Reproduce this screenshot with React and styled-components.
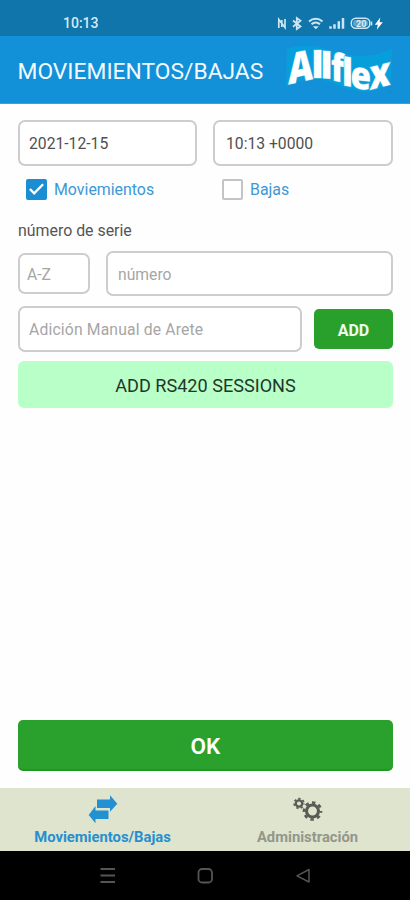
import { useState } from 'react';
import styled, { createGlobalStyle } from 'styled-components';

const GlobalStyle = createGlobalStyle`
  * {
    box-sizing: border-box;
  }

  body {
    margin: 0;
    background-color: #fefefe;
    font-family: Roboto, 'Noto Sans', sans-serif;
  }

  button,
  input {
    font-family: inherit;
  }
`;

const StyledScreen = styled.div`
  width: 410px;
  height: 900px;
  display: flex;
  flex-direction: column;
  overflow: hidden;
`;

// phone status bar
const StyledStatusBar = styled.div`
  height: 36px;
  padding: 14px 26px 0 63px;
  display: flex;
  justify-content: space-between;
  align-items: flex-start;
  background-color: #0f75aa;
`;

const StyledClock = styled.span`
  font-size: 14px;
  font-weight: 500;
  line-height: 19px;
  color: #d6eaf5;
`;

const StyledHeader = styled.header`
  height: 68px;
  padding: 0 16px 0 17.5px;
  display: flex;
  justify-content: space-between;
  align-items: center;
  background-color: #1391d8;
  border-bottom: 1px solid #3f9fd6;
`;

const StyledTitle = styled.h1`
  margin: 3px 0 0 0;
  font-size: 22.8px;
  font-weight: 400;
  white-space: nowrap;
  color: #f2faff;
`;

const StyledMain = styled.main`
  flex: 1;
  padding: 16px 17px 17px 18px;
  display: flex;
  flex-direction: column;
`;

const StyledRow = styled.div`
  display: flex;
  align-items: center;
  gap: ${(props) => props.$gap}px;
  margin-bottom: ${(props) => props.$bottom}px;
`;

const StyledInput = styled.input`
  width: ${(props) => props.$width}px;
  height: ${(props) => props.$height || 46}px;
  padding: 1px 11px 0 ${(props) => props.$left || 9}px;
  border: 2px solid #cdcdcd;
  border-radius: 7px;
  outline: none;
  background-color: #ffffff;
  font-size: 15.7px;
  letter-spacing: ${(props) => props.$spacing || 0}px;
  color: #505050;

  &::placeholder {
    color: #a6a6a6;
    opacity: 1;
  }
`;

const StyledCheckRow = styled.div`
  display: grid;
  grid-template-columns: 196px 1fr;
  height: 22px;
  padding-left: 8px;
  margin-bottom: 19px;
`;

const StyledCheckLabel = styled.button`
  padding: 0;
  border: none;
  background: none;
  display: flex;
  align-items: center;
  gap: 7px;
  font-size: 15.9px;
  color: #3d98d6;
`;

const StyledBox = styled.span`
  width: 21px;
  height: 21px;
  display: flex;
  justify-content: center;
  align-items: center;
  border: 2px solid ${(props) => (props.$checked ? '#1b8dd3' : '#c4c4c4')};
  border-radius: 2px;
  background-color: ${(props) => (props.$checked ? '#1b8dd3' : '#ffffff')};
`;

const StyledFieldTitle = styled.p`
  margin: 0 0 8px 0;
  height: 24px;
  line-height: 24px;
  font-size: 15.9px;
  color: #555555;
`;

const StyledAddButton = styled.button`
  width: 79px;
  height: 40px;
  padding: 2px 0 0 0;
  border: none;
  border-radius: 5px;
  background-color: #2aa02c;
  font-size: 16px;
  font-weight: 700;
  color: #eefbee;
`;

const StyledSessionsButton = styled.button`
  height: 47px;
  padding: 1px 0 0 0;
  border: none;
  border-radius: 6px;
  background-color: #b8ffc8;
  font-size: 18.1px;
  color: #24362a;
`;

const StyledOkButton = styled.button`
  height: 51px;
  margin-top: auto;
  padding: 3px 0 0 0;
  border: none;
  border-bottom: 2px solid #1c981f;
  border-radius: 5px;
  background-color: #2ba12d;
  font-size: 22.5px;
  font-weight: 600;
  color: #ffffff;
`;

const StyledTabBar = styled.nav`
  height: 63px;
  display: grid;
  grid-template-columns: 1fr 1fr;
  background-color: #dee4cd;
`;

const StyledTab = styled.button`
  padding: 7px 0 0 0;
  border: none;
  background: none;
  display: flex;
  flex-direction: column;
  align-items: center;
  gap: 4px;
  font-size: 14.8px;
  font-weight: 700;
  line-height: 20px;
  color: ${(props) => (props.$active ? '#258fd0' : '#93978a')};
`;

const StyledAndroidBar = styled.div`
  height: 49px;
  display: flex;
  justify-content: center;
  align-items: center;
  background-color: #000000;
`;

// letters are placed by matrix, their boxes can run past the drawing
const StyledLogo = styled.svg`
  overflow: visible;
`;

function StatusIcons() {
  return (
    <svg width='108' height='18' viewBox='276 14 108 18' fill='none' stroke='#cde5f2' strokeWidth='1.5'>
      {/* nfc */}
      <path d='M278.800 28V19.500l6.200 8V19M281.800 20v7' strokeWidth='1.700' />
      {/* bluetooth */}
      <path d='M293 20.500l7.500 6-3.700 2.500v-11l3.700 2.700-7.500 6' strokeWidth='1.800' />
      {/* wifi */}
      <path d='M309 21.500c4-3.700 9.500-3.700 13.500 0M311.500 24.300c2.500-2.300 6-2.300 8.500 0' strokeWidth='2.100' />
      <path d='M312.800 26.300h6l-3 3z' fill='#cde5f2' stroke='none' />
      {/* signal */}
      <path d='M330.500 28.700v-2.500M334.500 28.700v-4.500M338.800 28.700v-7.500M343 28.700V18' strokeWidth='2.500' />
      {/* battery */}
      <rect x='351.300' y='18.300' width='18.500' height='10' rx='4.500' />
      <rect x='353' y='20' width='15' height='6.600' rx='3' fill='#5fa5c8' stroke='none' />
      <path d='M371.500 21.500v4' />
      <text x='356' y='26.500' fontSize='9' fontWeight='700' fontFamily='Roboto, sans-serif' fill='#d9edf7' stroke='none'>
        20
      </text>
      <path d='M380.300 17.500l-5.500 7.200h3l-1 5 6-7.500h-3.200z' fill='#ffffff' stroke='none' />
    </svg>
  );
}

// each letter gets its own matrix so that the word follows the wave
const logoLetters = [
  { char: 'A', matrix: '1 -0.22 0 1.25 288.300 84.5' },
  { char: 'l', matrix: '1.1 0 0 1.07 311.500 77.500' },
  { char: 'l', matrix: '1.1 0.08 0 1.06 320.500 78' },
  { char: 'f', matrix: '0.93 0.2 0 1.13 331 80' },
  { char: 'l', matrix: '1 0.2 0 1.13 342 85' },
  { char: 'e', matrix: '0.98 0.1 0 1.12 350.500 88' },
  { char: 'x', matrix: '0.98 -0.25 0 1.2 369.500 90' },
];

function AllflexLogo() {
  return (
    <StyledLogo width='110' height='52' viewBox='284 44 110 52'>
      <path
        d='M287 49C303 44 317 46 330 50C350 57 370 59 392 49L391 83C372 96 352 92 335 84C318 76 302 78 286 87z'
        fill='#079fdb'
      />
      <g fontFamily='"Open Sans", sans-serif' fontWeight='800' fontSize='34' fill='#ffffff'>
        {logoLetters.map((letter, index) => (
          <text key={index} transform={`matrix(${letter.matrix})`} stroke='#4fb8e4' strokeWidth='1' paintOrder='stroke'>
            {letter.char}
          </text>
        ))}
      </g>
      <circle cx='390' cy='91.500' r='1.200' fill='#2c80b2' />
    </StyledLogo>
  );
}

function ArrowsIcon() {
  return (
    <svg width='30' height='28' viewBox='88 795 30 28' fill='#2390d2'>
      <path d='M97 799.500h13v-4.200l7.300 8.400-7.300 8v-3.700H97z' />
      <path d='M108.500 819h-13v4.200L88.700 815l6.800-9v4.500h13z' />
    </svg>
  );
}

// toothed wheel : dashed ring around a hollow circle
function Gear({ cx, cy, radius, width, teeth }) {
  const ring = radius + width;
  const dash = (2 * Math.PI * ring) / (teeth * 2);
  return (
    <g fill='none' stroke='#595c56'>
      <circle cx={cx} cy={cy} r={radius} strokeWidth={width + 0.4} />
      <circle cx={cx} cy={cy} r={ring - 0.2} strokeWidth={width} strokeDasharray={dash} strokeDashoffset={dash / 2} />
    </g>
  );
}

function GearsIcon() {
  return (
    <svg width='32' height='28' viewBox='292 795 32 28'>
      <Gear cx={299} cy={803.5} radius={3.2} width={1.8} teeth={7} />
      <Gear cx={312.5} cy={811} radius={6} width={2.7} teeth={8} />
    </svg>
  );
}

function AndroidIcons() {
  return (
    <svg width='212' height='18' viewBox='99 867 212 18' fill='none' stroke='#555555' strokeWidth='1.800'>
      <path d='M100.500 869h14.500M100.500 875.500h14.500M100.500 882h14.500' />
      <rect x='198.500' y='869' width='13.500' height='13.500' rx='3.500' />
      <path d='M309 869.500v12.500l-12-6.200z' strokeWidth='1.500' strokeLinejoin='round' />
    </svg>
  );
}

export default function App() {
  const [type, setType] = useState('movimientos');

  return (
    <>
      <GlobalStyle />
      <StyledScreen>
        <StyledStatusBar>
          <StyledClock>10:13</StyledClock>
          <StatusIcons />
        </StyledStatusBar>
        <StyledHeader>
          <StyledTitle>MOVIEMIENTOS/BAJAS</StyledTitle>
          <AllflexLogo />
        </StyledHeader>

        <StyledMain>
          <StyledRow $gap={16} $bottom={12}>
            <StyledInput $width={179} defaultValue='2021-12-15' />
            <StyledInput $width={180} $left={11} defaultValue='10:13 +0000' />
          </StyledRow>

          <StyledCheckRow>
            <StyledCheckLabel onClick={() => setType('movimientos')}>
              <StyledBox $checked={type === 'movimientos'}>
                {type === 'movimientos' && (
                  <svg width='17' height='14' viewBox='0 0 18 14' fill='none' stroke='#ffffff' strokeWidth='2.500'>
                    <path d='M2 7l4.500 4.500L16 2' />
                  </svg>
                )}
              </StyledBox>
              Moviemientos
            </StyledCheckLabel>
            <StyledCheckLabel onClick={() => setType('bajas')}>
              <StyledBox $checked={type === 'bajas'} />
              Bajas
            </StyledCheckLabel>
          </StyledCheckRow>

          <StyledFieldTitle>número de serie</StyledFieldTitle>
          <StyledRow $gap={16} $bottom={10}>
            <StyledInput $width={72} $height={41} $left={7} placeholder='A-Z' />
            <StyledInput $width={287} $height={45} $left={10} placeholder='número' />
          </StyledRow>
          <StyledRow $gap={12} $bottom={9}>
            <StyledInput $width={284} $spacing={0.17} placeholder='Adición Manual de Arete' />
            <StyledAddButton>ADD</StyledAddButton>
          </StyledRow>
          <StyledSessionsButton>ADD RS420 SESSIONS</StyledSessionsButton>
          <StyledOkButton>OK</StyledOkButton>
        </StyledMain>

        <StyledTabBar>
          <StyledTab $active>
            <ArrowsIcon />
            Moviemientos/Bajas
          </StyledTab>
          <StyledTab>
            <GearsIcon />
            Administración
          </StyledTab>
        </StyledTabBar>
        <StyledAndroidBar>
          <AndroidIcons />
        </StyledAndroidBar>
      </StyledScreen>
    </>
  );
}
